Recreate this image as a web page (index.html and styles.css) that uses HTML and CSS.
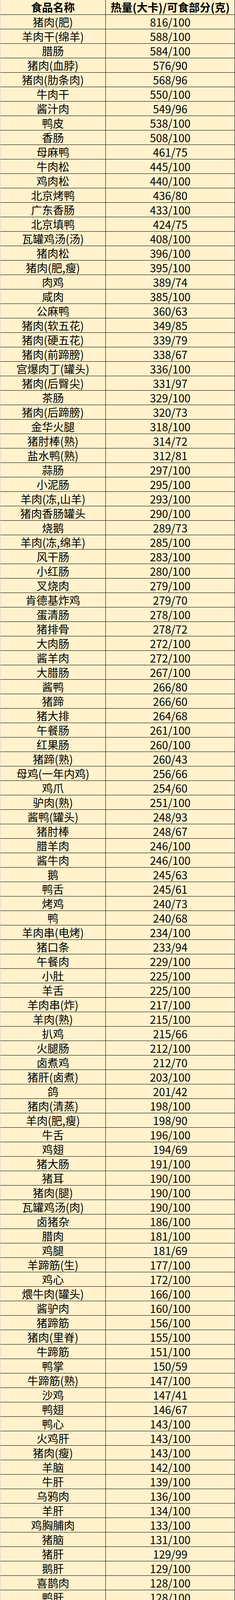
FILE: index.html
```html
<!DOCTYPE html>
<html lang="zh-CN">
<head>
<meta charset="utf-8">
<title>肉类热量表</title>
<link rel="stylesheet" href="styles.css">
</head>
<body>
<div class="sheet">
<div class="row head"><div class="cell name">食品名称</div><div class="cell val">热量(大卡)/可食部分(克)</div></div>
<div class="row"><div class="cell name">猪肉(肥)</div><div class="cell val">816/100</div></div>
<div class="row"><div class="cell name">羊肉干(绵羊)</div><div class="cell val">588/100</div></div>
<div class="row"><div class="cell name">腊肠</div><div class="cell val">584/100</div></div>
<div class="row"><div class="cell name">猪肉(血脖)</div><div class="cell val">576/90</div></div>
<div class="row"><div class="cell name">猪肉(肋条肉)</div><div class="cell val">568/96</div></div>
<div class="row"><div class="cell name">牛肉干</div><div class="cell val">550/100</div></div>
<div class="row"><div class="cell name">酱汁肉</div><div class="cell val">549/96</div></div>
<div class="row"><div class="cell name">鸭皮</div><div class="cell val">538/100</div></div>
<div class="row"><div class="cell name">香肠</div><div class="cell val">508/100</div></div>
<div class="row"><div class="cell name">母麻鸭</div><div class="cell val">461/75</div></div>
<div class="row"><div class="cell name">牛肉松</div><div class="cell val">445/100</div></div>
<div class="row"><div class="cell name">鸡肉松</div><div class="cell val">440/100</div></div>
<div class="row"><div class="cell name">北京烤鸭</div><div class="cell val">436/80</div></div>
<div class="row"><div class="cell name">广东香肠</div><div class="cell val">433/100</div></div>
<div class="row"><div class="cell name">北京填鸭</div><div class="cell val">424/75</div></div>
<div class="row"><div class="cell name">瓦罐鸡汤(汤)</div><div class="cell val">408/100</div></div>
<div class="row"><div class="cell name">猪肉松</div><div class="cell val">396/100</div></div>
<div class="row"><div class="cell name">猪肉(肥,瘦)</div><div class="cell val">395/100</div></div>
<div class="row"><div class="cell name">肉鸡</div><div class="cell val">389/74</div></div>
<div class="row"><div class="cell name">咸肉</div><div class="cell val">385/100</div></div>
<div class="row"><div class="cell name">公麻鸭</div><div class="cell val">360/63</div></div>
<div class="row"><div class="cell name">猪肉(软五花)</div><div class="cell val">349/85</div></div>
<div class="row"><div class="cell name">猪肉(硬五花)</div><div class="cell val">339/79</div></div>
<div class="row"><div class="cell name">猪肉(前蹄膀)</div><div class="cell val">338/67</div></div>
<div class="row"><div class="cell name">宫爆肉丁(罐头)</div><div class="cell val">336/100</div></div>
<div class="row"><div class="cell name">猪肉(后臀尖)</div><div class="cell val">331/97</div></div>
<div class="row"><div class="cell name">茶肠</div><div class="cell val">329/100</div></div>
<div class="row"><div class="cell name">猪肉(后蹄膀)</div><div class="cell val">320/73</div></div>
<div class="row"><div class="cell name">金华火腿</div><div class="cell val">318/100</div></div>
<div class="row"><div class="cell name">猪肘棒(熟)</div><div class="cell val">314/72</div></div>
<div class="row"><div class="cell name">盐水鸭(熟)</div><div class="cell val">312/81</div></div>
<div class="row"><div class="cell name">蒜肠</div><div class="cell val">297/100</div></div>
<div class="row"><div class="cell name">小泥肠</div><div class="cell val">295/100</div></div>
<div class="row"><div class="cell name">羊肉(冻,山羊)</div><div class="cell val">293/100</div></div>
<div class="row"><div class="cell name">猪肉香肠罐头</div><div class="cell val">290/100</div></div>
<div class="row"><div class="cell name">烧鹅</div><div class="cell val">289/73</div></div>
<div class="row"><div class="cell name">羊肉(冻,绵羊)</div><div class="cell val">285/100</div></div>
<div class="row"><div class="cell name">风干肠</div><div class="cell val">283/100</div></div>
<div class="row"><div class="cell name">小红肠</div><div class="cell val">280/100</div></div>
<div class="row"><div class="cell name">叉烧肉</div><div class="cell val">279/100</div></div>
<div class="row"><div class="cell name">肯德基炸鸡</div><div class="cell val">279/70</div></div>
<div class="row"><div class="cell name">蛋清肠</div><div class="cell val">278/100</div></div>
<div class="row"><div class="cell name">猪排骨</div><div class="cell val">278/72</div></div>
<div class="row"><div class="cell name">大肉肠</div><div class="cell val">272/100</div></div>
<div class="row"><div class="cell name">酱羊肉</div><div class="cell val">272/100</div></div>
<div class="row"><div class="cell name">大腊肠</div><div class="cell val">267/100</div></div>
<div class="row"><div class="cell name">酱鸭</div><div class="cell val">266/80</div></div>
<div class="row"><div class="cell name">猪蹄</div><div class="cell val">266/60</div></div>
<div class="row"><div class="cell name">猪大排</div><div class="cell val">264/68</div></div>
<div class="row"><div class="cell name">午餐肠</div><div class="cell val">261/100</div></div>
<div class="row"><div class="cell name">红果肠</div><div class="cell val">260/100</div></div>
<div class="row"><div class="cell name">猪蹄(熟)</div><div class="cell val">260/43</div></div>
<div class="row"><div class="cell name">母鸡(一年内鸡)</div><div class="cell val">256/66</div></div>
<div class="row"><div class="cell name">鸡爪</div><div class="cell val">254/60</div></div>
<div class="row"><div class="cell name">驴肉(熟)</div><div class="cell val">251/100</div></div>
<div class="row"><div class="cell name">酱鸭(罐头)</div><div class="cell val">248/93</div></div>
<div class="row"><div class="cell name">猪肘棒</div><div class="cell val">248/67</div></div>
<div class="row"><div class="cell name">腊羊肉</div><div class="cell val">246/100</div></div>
<div class="row"><div class="cell name">酱牛肉</div><div class="cell val">246/100</div></div>
<div class="row"><div class="cell name">鹅</div><div class="cell val">245/63</div></div>
<div class="row"><div class="cell name">鸭舌</div><div class="cell val">245/61</div></div>
<div class="row"><div class="cell name">烤鸡</div><div class="cell val">240/73</div></div>
<div class="row"><div class="cell name">鸭</div><div class="cell val">240/68</div></div>
<div class="row"><div class="cell name">羊肉串(电烤)</div><div class="cell val">234/100</div></div>
<div class="row"><div class="cell name">猪口条</div><div class="cell val">233/94</div></div>
<div class="row"><div class="cell name">午餐肉</div><div class="cell val">229/100</div></div>
<div class="row"><div class="cell name">小肚</div><div class="cell val">225/100</div></div>
<div class="row"><div class="cell name">羊舌</div><div class="cell val">225/100</div></div>
<div class="row"><div class="cell name">羊肉串(炸)</div><div class="cell val">217/100</div></div>
<div class="row"><div class="cell name">羊肉(熟)</div><div class="cell val">215/100</div></div>
<div class="row"><div class="cell name">扒鸡</div><div class="cell val">215/66</div></div>
<div class="row"><div class="cell name">火腿肠</div><div class="cell val">212/100</div></div>
<div class="row"><div class="cell name">卤煮鸡</div><div class="cell val">212/70</div></div>
<div class="row"><div class="cell name">猪肝(卤煮)</div><div class="cell val">203/100</div></div>
<div class="row"><div class="cell name">鸽</div><div class="cell val">201/42</div></div>
<div class="row"><div class="cell name">猪肉(清蒸)</div><div class="cell val">198/100</div></div>
<div class="row"><div class="cell name">羊肉(肥,瘦)</div><div class="cell val">198/90</div></div>
<div class="row"><div class="cell name">牛舌</div><div class="cell val">196/100</div></div>
<div class="row"><div class="cell name">鸡翅</div><div class="cell val">194/69</div></div>
<div class="row"><div class="cell name">猪大肠</div><div class="cell val">191/100</div></div>
<div class="row"><div class="cell name">猪耳</div><div class="cell val">190/100</div></div>
<div class="row"><div class="cell name">猪肉(腿)</div><div class="cell val">190/100</div></div>
<div class="row"><div class="cell name">瓦罐鸡汤(肉)</div><div class="cell val">190/100</div></div>
<div class="row"><div class="cell name">卤猪杂</div><div class="cell val">186/100</div></div>
<div class="row"><div class="cell name">腊肉</div><div class="cell val">181/100</div></div>
<div class="row"><div class="cell name">鸡腿</div><div class="cell val">181/69</div></div>
<div class="row"><div class="cell name">羊蹄筋(生)</div><div class="cell val">177/100</div></div>
<div class="row"><div class="cell name">鸡心</div><div class="cell val">172/100</div></div>
<div class="row"><div class="cell name">煨牛肉(罐头)</div><div class="cell val">166/100</div></div>
<div class="row"><div class="cell name">酱驴肉</div><div class="cell val">160/100</div></div>
<div class="row"><div class="cell name">猪蹄筋</div><div class="cell val">156/100</div></div>
<div class="row"><div class="cell name">猪肉(里脊)</div><div class="cell val">155/100</div></div>
<div class="row"><div class="cell name">牛蹄筋</div><div class="cell val">151/100</div></div>
<div class="row"><div class="cell name">鸭掌</div><div class="cell val">150/59</div></div>
<div class="row"><div class="cell name">牛蹄筋(熟)</div><div class="cell val">147/100</div></div>
<div class="row"><div class="cell name">沙鸡</div><div class="cell val">147/41</div></div>
<div class="row"><div class="cell name">鸭翅</div><div class="cell val">146/67</div></div>
<div class="row"><div class="cell name">鸭心</div><div class="cell val">143/100</div></div>
<div class="row"><div class="cell name">火鸡肝</div><div class="cell val">143/100</div></div>
<div class="row"><div class="cell name">猪肉(瘦)</div><div class="cell val">143/100</div></div>
<div class="row"><div class="cell name">羊脑</div><div class="cell val">142/100</div></div>
<div class="row"><div class="cell name">牛肝</div><div class="cell val">139/100</div></div>
<div class="row"><div class="cell name">乌鸦肉</div><div class="cell val">136/100</div></div>
<div class="row"><div class="cell name">羊肝</div><div class="cell val">134/100</div></div>
<div class="row"><div class="cell name">鸡胸脯肉</div><div class="cell val">133/100</div></div>
<div class="row"><div class="cell name">猪脑</div><div class="cell val">131/100</div></div>
<div class="row"><div class="cell name">猪肝</div><div class="cell val">129/99</div></div>
<div class="row"><div class="cell name">鹅肝</div><div class="cell val">129/100</div></div>
<div class="row"><div class="cell name">喜鹊肉</div><div class="cell val">128/100</div></div>
<div class="row"><div class="cell name">鸭肝</div><div class="cell val">128/100</div></div>
<div class="row"><div class="cell name">土鸡</div><div class="cell val">124/58</div></div>
<div class="row"><div class="cell name">马肉</div><div class="cell val">122/100</div></div>
<div class="row"><div class="cell name">鸡肝(肉鸡)</div><div class="cell val">121/100</div></div>
<div class="row"><div class="cell name">鸡肝</div><div class="cell val">121/100</div></div>
<div class="row"><div class="cell name">猪心</div><div class="cell val">119/97</div></div>
<div class="row"><div class="cell name">羊肉(瘦)</div><div class="cell val">118/90</div></div>
<div class="row"><div class="cell name">鸡胗</div><div class="cell val">118/100</div></div>
<div class="row"><div class="cell name">方腿</div><div class="cell val">117/100</div></div>
<div class="row"><div class="cell name">狗肉</div><div class="cell val">116/80</div></div>
<div class="row"><div class="cell name">驴肉(瘦)</div><div class="cell val">116/100</div></div>
<div class="row"><div class="cell name">羊心</div><div class="cell val">113/100</div></div>
<div class="row"><div class="cell name">羊肉(前腿)</div><div class="cell val">111/71</div></div>
<div class="row"><div class="cell name">乌骨鸡</div><div class="cell val">111/48</div></div>
<div class="row"><div class="cell name">鹌鹑</div><div class="cell val">110/58</div></div>
<div class="row"><div class="cell name">猪肚</div><div class="cell val">110/96</div></div>
<div class="row"><div class="cell name">羊肉(胸脯)</div><div class="cell val">109/81</div></div>
<div class="row"><div class="cell name">羊肉(颈)</div><div class="cell val">109/74</div></div>
<div class="row"><div class="cell name">牛肉(瘦)</div><div class="cell val">106/100</div></div>
<div class="row"><div class="cell name">火鸡胸脯肉</div><div class="cell val">103/100</div></div>
<div class="row"><div class="cell name">羊肉(后腿)</div><div class="cell val">102/77</div></div>
<div class="row"><div class="cell name">兔肉</div><div class="cell val">102/100</div></div>
<div class="row"><div class="cell name">牛肉(前腱)</div><div class="cell val">100/95</div></div>
<div class="row"><div class="cell name">鹅肫</div><div class="cell val">100/100</div></div>
<div class="row"><div class="cell name">牛肉(后腿)</div><div class="cell val">98/100</div></div>
<div class="row"><div class="cell name">猪腰子</div><div class="cell val">96/93</div></div>
<div class="row"><div class="cell name">牛肉(前腿)</div><div class="cell val">95/100</div></div>
<div class="row"><div class="cell name">牛肺</div><div class="cell val">94/100</div></div>
<div class="row"><div class="cell name">羊肉(脊背)</div><div class="cell val">94/100</div></div>
<div class="row"><div class="cell name">牛肉(后腱)</div><div class="cell val">93/94</div></div>
<div class="row"><div class="cell name">鸭肫</div><div class="cell val">92/93</div></div>
<div class="row"><div class="cell name">火鸡肫</div><div class="cell val">91/100</div></div>
<div class="row"><div class="cell name">火鸡腿</div><div class="cell val">90/100</div></div>
<div class="row"><div class="cell name">羊肾</div><div class="cell val">90/100</div></div>
<div class="row"><div class="cell name">鸭胸脯肉</div><div class="cell val">90/100</div></div>
<div class="row"><div class="cell name">羊肚</div><div class="cell val">87/100</div></div>
<div class="row"><div class="cell name">野兔肉</div><div class="cell val">84/100</div></div>
<div class="row"><div class="cell name">猪肺</div><div class="cell val">84/97</div></div>
<div class="row"><div class="cell name">牛肚</div><div class="cell val">72/100</div></div>
<div class="row"><div class="cell name">羊大肠</div><div class="cell val">70/100</div></div>
<div class="row"><div class="cell name">猪小肠</div><div class="cell val">65/100</div></div>
<div class="row"><div class="cell name">鸭血(白鸭)</div><div class="cell val">58/100</div></div>
<div class="row"><div class="cell name">羊血</div><div class="cell val">57/100</div></div>
<div class="row"><div class="cell name">猪血</div><div class="cell val">55/100</div></div>
<div class="row"><div class="cell name">鸡血</div><div class="cell val">49/100</div></div>
</div>
</body>
</html>
```

FILE: styles.css
```css
html, body {
  margin: 0;
  padding: 0;
  background: #ffffff;
}

.sheet {
  width: 602px;
  box-sizing: border-box;
  background: #fff2cc;
  border-left: 1px solid #c6c6c6;
  border-right: 1px solid #000000;
  font-family: "Noto Sans CJK SC", "Noto Sans", sans-serif;
  font-size: 28px;
  color: #000000;
}

.row {
  display: grid;
  grid-template-columns: 270px 1fr;
  grid-template-rows: 36px;
  border-bottom: 1px solid #000000;
  height: 37px;
  box-sizing: border-box;
}

.cell {
  text-align: center;
  white-space: nowrap;
  line-height: 36px;
  height: 36px;
}

.name {
  border-right: 1px solid #000000;
}

.head {
  height: 38px;
  grid-template-rows: 37px;
  font-weight: 700;
}

.head .cell {
  line-height: 37px;
  height: 37px;
}
```
